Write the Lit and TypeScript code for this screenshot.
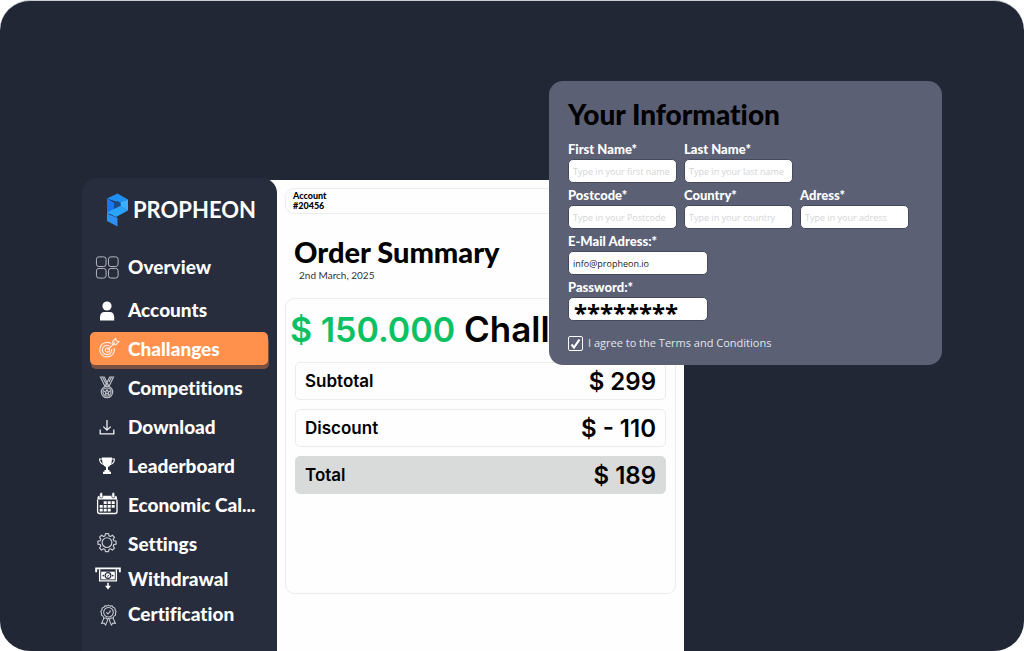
import { LitElement, html, svg, css, nothing } from "lit";
import { customElement, property } from "lit/decorators.js";

const icons: Record<string, unknown> = {
  overview: svg`<g fill="none" stroke="#b9bcc5" stroke-width="1"><rect x="1.5" y="2.500" width="10" height="10" rx="2.5"/><rect x="14" y="2.500" width="10" height="10" rx="2.5"/><rect x="1.5" y="14.500" width="10" height="10" rx="2.5"/><rect x="14" y="14.500" width="10" height="10" rx="2.5"/></g>`,
  accounts: svg`<circle cx="12" cy="7" r="4.6" fill="#fff"/><path d="M5 21.500v-3.200c0-3.400 2-5.300 4.300-5.300h5.600c2.400 0 4.300 1.900 4.300 5.300v3.200z" fill="#fff"/>`,
  challenges: svg`<g fill="none" stroke="#ffe9dc" stroke-width="1.200" transform="translate(3 -1)"><path d="M13.300 6.700A7.300 7.300 0 1 0 16.200 11"/><path d="M11.500 9A4.700 4.700 0 1 0 13.600 12"/><circle cx="9.500" cy="13" r="2.200"/><path d="M9.500 13 17 5.500M15 7.500l-.300-3 3-3 .600 2.600 2.600.600-3 3z"/></g>`,
  competitions: svg`<g fill="none" stroke="#b9bcc5" stroke-width="1.200"><path d="M5.500 0h3.800l4.700 9.500h-4zM18.500 0h-3.800l-4.700 9.500h4zM7.400 0l4.700 8.500M16.600 0l-2.700 5"/><circle cx="12" cy="15" r="5.700"/><circle cx="12" cy="15" r="4"/><path d="m12 12.600.8 1.600 1.700.2-1.300 1.200.4 1.700-1.600-.8-1.600.8.4-1.700-1.300-1.200 1.700-.2z"/></g>`,
  download: svg`<g fill="none" stroke="#f0f1f4" stroke-width="1.300"><path d="M12 4v10M8.300 10.600 12 14.200l3.700-3.600M5.200 13.500v4.300h13.600v-4.300"/></g>`,
  leaderboard: svg`<path d="M7 2.500h10c0 5-1 8.300-4 9.500v3h1.500v1.700H16v2.300H8v-2.300h1.500V15H11v-3c-3-1.200-4-4.500-4-9.500z" fill="#fff"/><path d="M7.500 4H4.600c0 3.300 1.600 5 4.400 5.500M16.500 4h2.900c0 3.300-1.600 5-4.400 5.500" fill="none" stroke="#fff" stroke-width="1.100"/>`,
  calendar: svg`<g transform="translate(0 -1.500)"><path d="M2.500 7V5.200c0-1.300.7-2 2-2H20c1.300 0 2 .7 2 2V7z" fill="#fff"/><path d="M2.600 7v12c0 1.400.6 2 2 2H20c1.400 0 2-.6 2-2V7" fill="none" stroke="#fff" stroke-width="1.300"/><rect x="4.700" y="0" width="3" height="5.500" rx="1.400" fill="#fff" stroke="#282d3d" stroke-width=".7"/><rect x="16.800" y="0" width="3" height="5.500" rx="1.400" fill="#fff" stroke="#282d3d" stroke-width=".7"/><path d="M8.700 8.700h3v2.800h-3zM12.700 8.700h3v2.800h-3zM16.700 8.700h3v2.800h-3zM4.700 12.500h3v2.800h-3zM8.700 12.500h3v2.800h-3zM12.700 12.500h3v2.800h-3zM16.700 12.500h3v2.800h-3zM4.700 16.300h3v2.800h-3zM8.700 16.300h3v2.800h-3zM12.700 16.300h3v2.800h-3z" fill="#fff"/></g>`,
  settings: svg`<g fill="none" stroke="#c9ccd4" stroke-width="1.300" stroke-linejoin="round" transform="translate(1.200 -1.200) scale(.9)"><path d="M10.300 2h3.400l.5 2.500 1.700.7L18 3.800 20.300 6l-1.400 2.200.7 1.700 2.500.5v3.300l-2.500.5-.7 1.700 1.400 2.100-2.300 2.300-2.100-1.400-1.700.7-.5 2.400h-3.400l-.5-2.400-1.700-.7L6 20.300 3.700 18l1.400-2.100-.7-1.700-2.500-.5v-3.300l2.500-.5.700-1.700L3.700 6 6 3.800l2.100 1.400 1.700-.7z"/><circle cx="12" cy="12" r="5.400"/></g>`,
  withdrawal: svg`<path d="M1.200 6V2h24.600V6" fill="none" stroke="#fff" stroke-width="2"/><path d="M4.800 3v12h17.400V3" fill="none" stroke="#fff" stroke-width="1.400"/><rect x="6.400" y="5.400" width="14.200" height="8" fill="#fff"/><circle cx="13.500" cy="9.400" r="3" fill="#fff" stroke="#282d3d" stroke-width="1.200"/><path d="m12.200 9.400 1 1 1.700-2" fill="none" stroke="#282d3d" stroke-width=".9"/><circle cx="8.600" cy="9.400" r=".9" fill="#282d3d"/><circle cx="18.400" cy="9.400" r=".9" fill="#282d3d"/><path d="M12.700 17h1.600v3h2.300l-3.100 4-3.100-4h2.300z" fill="#fff"/>`,
  certification: svg`<g fill="none" stroke="#c9ccd4" stroke-width="1.100" stroke-linejoin="round" transform="translate(1 1.500)"><path d="m13 2.300 1.700 1 2-.3 1.100 1.600 1.900.8.100 2 1.200 1.500-.8 1.800.2 2-1.700 1-.8 1.800-2 .1-1.500 1.200-1.400-.6-1.400.6-1.500-1.200-2-.1-.8-1.800-1.700-1 .2-2L5 8.900l1.200-1.500.1-2 1.900-.8L9.300 3l2 .3z"/><circle cx="13" cy="9.700" r="5"/><path d="m10.700 9.700 1.700 1.700 3-3.400M8.300 15.500l-2.500 5.800 2.700-.5 1.500 2.300 2.400-6M17.700 15.500l2.500 5.800-2.700-.5-1.500 2.300-2.400-6"/></g>`,
};

const wide = new Set(["overview", "withdrawal", "certification"]);

interface Entry {
  icon: string;
  label: string;
  active?: boolean;
}

const groups: { cls: string; entries: Entry[] }[] = [
  { cls: "group first", entries: [{ icon: "overview", label: "Overview" }] },
  {
    cls: "group",
    entries: [
      { icon: "accounts", label: "Accounts" },
      { icon: "challenges", label: "Challanges", active: true },
      { icon: "competitions", label: "Competitions" },
      { icon: "download", label: "Download" },
      { icon: "leaderboard", label: "Leaderboard" },
      { icon: "calendar", label: "Economic Cal..." },
      { icon: "settings", label: "Settings" },
    ],
  },
  {
    cls: "group tight",
    entries: [
      { icon: "withdrawal", label: "Withdrawal" },
      { icon: "certification", label: "Certification" },
    ],
  },
];

@customElement("side-bar")
export class SideBar extends LitElement {
  static styles = css`
    :host {
      display: block;
      box-sizing: border-box;
      padding: 14px 9px 8px 8px;
      background: #282d3d;
      border-radius: 15px 15px 0 0;
      color: #fff;
      font-family: Lato, "Liberation Sans", sans-serif;
      font-variant-ligatures: none;
    }
    .brand {
      display: flex;
      align-items: center;
      gap: 4px;
      height: 36px;
      padding-left: 16px;
      margin-bottom: 22px;
      font-size: 22px;
      font-weight: 700;
      line-height: 28px;
    }
    .mark {
      width: 23px;
      height: 34px;
      flex: none;
    }
    .group {
      display: grid;
      gap: 6px;
      margin: 0 0 2px;
      padding: 0;
      list-style: none;
    }
    .first {
      margin-bottom: 10px;
    }
    .tight {
      gap: 2px;
    }
    .link {
      display: flex;
      align-items: center;
      gap: 7px;
      height: 33px;
      padding-left: 5px;
      border-radius: 5px;
      color: inherit;
      font-size: 19px;
      font-weight: 900;
      line-height: 24px;
      text-decoration: none;
      white-space: nowrap;
    }
    .active {
      background: #ff914d;
      box-shadow: 1px 4px 0 #7b5142;
    }
    .icon {
      width: 26px;
      height: 26px;
      flex: none;
    }
  `;

  render() {
    return html`
      <div class="brand">
        <svg class="mark" viewBox="0 0 23 34" aria-hidden="true">
          <path d="M1 5.500 11.500.5 22 6.500 14 10z" fill="#1f8ff2" />
          <path d="M1 5.500 8 9.500v9L1 22z" fill="#1877ee" />
          <path d="M14 9.500 22 6.500v11l-7.500-4z" fill="#3bb0fc" />
          <path d="M8 9v7.500l6.500-3.500V9.500L11 8z" fill="#1c4a86" />
          <path d="M1 19.500 14 13l8 4.500-12 6.500z" fill="#2aa4fb" />
          <path d="M1 20.500 11.500 25v8.500L1 28z" fill="#2f8ff5" />
        </svg>
        <span>PROPHEON</span>
      </div>
      <nav aria-label="Main">
        ${groups.map(
          (g) => html`<ul class=${g.cls}>
            ${g.entries.map(
              (e) => html`<li>
                <a class=${e.active ? "link active" : "link"} href="#" aria-current=${e.active ? "page" : nothing}>
                  <svg class="icon" viewBox=${wide.has(e.icon) ? "0 0 27 26" : "0 -2 26 26"} aria-hidden="true">${icons[e.icon]}</svg>
                  <span>${e.label}</span>
                </a>
              </li>`
            )}
          </ul>`
        )}
      </nav>
    `;
  }
}

@customElement("order-summary")
export class OrderSummary extends LitElement {
  static styles = css`
    :host {
      display: block;
      box-sizing: border-box;
      padding: 8px;
      background: #fefefe;
      color: #000;
      font-family: Lato, "Liberation Sans", sans-serif;
    }
    .account {
      display: grid;
      padding: 2px 7px;
      border: 1px solid #ececec;
      border-radius: 9px;
      font-size: 9px;
      font-weight: 900;
      line-height: 10px;
    }
    .title {
      margin: 21px 0 0 9px;
      font-size: 29px;
      font-weight: 900;
      line-height: 34px;
    }
    .date {
      margin: 0 0 17px 14px;
      color: #333;
      font-size: 10px;
      line-height: 12px;
    }
    .panel {
      box-sizing: border-box;
      min-height: 296px;
      padding: 8px 9px;
      border: 1px solid #ececec;
      border-radius: 9px;
      font-family: Inter, "Open Sans", sans-serif;
      font-weight: 600;
    }
    .plan {
      margin: 0 -5px 10px;
      font-size: 35px;
      font-weight: 600;
      line-height: 44px;
      white-space: nowrap;
    }
    .sum {
      color: #0cc162;
      font-size: 34px;
    }
    .lines {
      display: grid;
      gap: 9px;
      margin: 0;
    }
    .line {
      display: flex;
      align-items: center;
      justify-content: space-between;
      box-sizing: border-box;
      height: 38px;
      padding: 0 9px;
      border: 1px solid #ececec;
      border-radius: 5px;
      font-size: 17px;
    }
    .total {
      border-color: #d9dbda;
      background: #d9dbda;
    }
    .value {
      margin: 0;
      font-size: 24px;
    }
  `;

  render() {
    return html`
      <div class="account"><span>Account</span><span>#20456</span></div>
      <h1 class="title">Order Summary</h1>
      <p class="date">2nd March, 2025</p>
      <section class="panel">
        <h2 class="plan"><span class="sum">$ 150.000</span> Chall</h2>
        <dl class="lines">
          <div class="line"><dt>Subtotal</dt><dd class="value">$ 299</dd></div>
          <div class="line"><dt>Discount</dt><dd class="value">$ - 110</dd></div>
          <div class="line total"><dt>Total</dt><dd class="value">$ 189</dd></div>
        </dl>
      </section>
    `;
  }
}

@customElement("form-field")
export class FormField extends LitElement {
  @property() label = "";
  @property() hint = "";
  @property() value = "";
  @property({ type: Boolean }) masked = false;

  static styles = css`
    :host {
      display: grid;
      gap: 1px;
    }
    .label {
      color: #fff;
      font: 900 13px/18px Lato, "Liberation Sans", sans-serif;
      white-space: nowrap;
    }
    .input {
      box-sizing: border-box;
      width: 100%;
      height: 24px;
      padding: 0 4px;
      border: 1px solid #454a5b;
      border-radius: 5px;
      background: #fff;
      color: #222;
      font: 400 9px/12px "Open Sans", "Noto Sans", sans-serif;
    }
    .input::placeholder {
      color: #d4d4d6;
      opacity: 1;
    }
    .masked {
      padding: 7px 5px 0;
      color: #000;
      font: 700 24px/16px "Noto Sans", "Open Sans", sans-serif;
    }
  `;

  render() {
    return html`
      <label class="label" for="field">${this.label}</label>
      <input
        id="field"
        class=${this.masked ? "input masked" : "input"}
        type="text"
        autocomplete="off"
        placeholder=${this.hint}
        .value=${this.value}
      />
    `;
  }
}

@customElement("info-card")
export class InfoCard extends LitElement {
  static styles = css`
    :host {
      display: block;
      box-sizing: border-box;
      padding: 15px 33px 14px 19px;
      border-radius: 14px;
      background: #5b6075;
      font-variant-ligatures: none;
    }
    .title {
      margin: 0 0 8px;
      color: #000;
      font-family: Lato, "Liberation Sans", sans-serif;
      font-size: 28px;
      font-weight: 900;
      line-height: 36px;
    }
    .fields {
      display: grid;
      grid-template-columns: repeat(3, 1fr);
      gap: 3px 7px;
    }
    .third {
      grid-column: 1;
    }
    .account {
      display: grid;
      width: 140px;
      gap: 3px;
      margin-top: 3px;
    }
    .terms {
      display: flex;
      align-items: center;
      gap: 5px;
      margin-top: 14px;
      color: #e4e5ea;
      font: 400 11px/16px "Open Sans", "Noto Sans", sans-serif;
    }
    .check {
      appearance: none;
      box-sizing: border-box;
      width: 15px;
      height: 15px;
      margin: 0;
      border: 1px solid #fff;
      border-radius: 2px;
      background: url("data:image/svg+xml,%3Csvg xmlns='http://www.w3.org/2000/svg' viewBox='0 0 13 13'%3E%3Cpath d='M2.500 7.500 5 10.500 10.500 2.500' fill='none' stroke='white' stroke-width='2.200'/%3E%3C/svg%3E") center / 13px no-repeat;
    }
  `;

  render() {
    return html`
      <form>
        <h2 class="title">Your Information</h2>
        <div class="fields">
          <form-field label="First Name*" hint="Type in your first name"></form-field>
          <form-field label="Last Name*" hint="Type in your last name"></form-field>
          <form-field class="third" label="Postcode*" hint="Type in your Postcode"></form-field>
          <form-field label="Country*" hint="Type in your country"></form-field>
          <form-field label="Adress*" hint="Type in your adress"></form-field>
        </div>
        <div class="account">
          <form-field label="E-Mail Adress:*" value="info@propheon.io"></form-field>
          <form-field label="Password:*" value="********" masked></form-field>
        </div>
        <label class="terms"><input class="check" type="checkbox" checked /><span>I agree to the Terms and Conditions</span></label>
      </form>
    `;
  }
}

@customElement("app-root")
export class AppRoot extends LitElement {
  static styles = css`
    :host {
      display: block;
      background: #fff;
    }
    .stage {
      position: relative;
      display: grid;
      box-sizing: border-box;
      min-height: 100vh;
      padding: 177px 340px 0 82px;
      overflow: hidden;
      border-top: 1px solid #c8cad0;
      border-radius: 30px;
      background: #212735;
    }
    .window {
      display: grid;
      grid-template-columns: 195px 1fr;
      background: linear-gradient(#fefefe, #fefefe) 180px 2px no-repeat;
    }
    .main {
      margin-top: 2px;
    }
    .overlay {
      position: absolute;
      top: 80px;
      right: 82px;
      width: 393px;
    }
  `;

  render() {
    return html`
      <div class="stage">
        <div class="window">
          <side-bar></side-bar>
          <order-summary class="main"></order-summary>
        </div>
        <info-card class="overlay"></info-card>
      </div>
    `;
  }
}
